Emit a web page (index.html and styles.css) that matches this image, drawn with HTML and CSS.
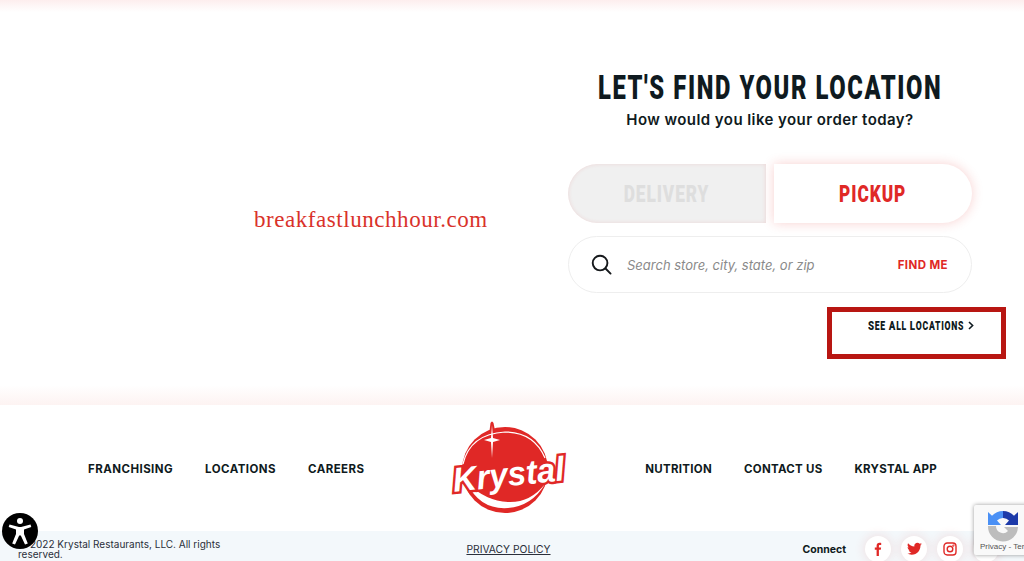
FILE: index.html
```html
<!DOCTYPE html>
<html lang="en">
  <head>
    <meta charset="UTF-8" />
    <meta name="viewport" content="width=device-width, initial-scale=1.0" />
    <title>Krystal Locations</title>
    <link rel="stylesheet" href="styles.css">
  </head>
  <body>
    <main class="finder">
      <div class="watermark">breakfastlunchhour.com</div>
      <div class="finder-col">
        <h1><span class="narrow">LET'S FIND YOUR LOCATION</span></h1>
        <p class="subtitle">How would you like your order today?</p>
        <div class="toggle">
          <div class="toggle-btn delivery"><span class="narrow">DELIVERY</span></div>
          <div class="toggle-btn pickup"><span class="narrow">PICKUP</span></div>
        </div>
        <div class="search">
          <svg class="search-icon" width="21" height="21" viewBox="0 0 22 22" fill="none" stroke="#16191c" stroke-width="2">
            <circle cx="9.5" cy="9.5" r="7.7" />
            <path d="M15.2 15.2 L20.5 20.5" stroke-linecap="round" />
          </svg>
          <span class="search-text">Search store, city, state, or zip</span>
          <span class="find-me">FIND ME</span>
        </div>
        <a class="all-locations">
          <span class="all-text"><span class="cap">S</span>EE <span class="cap">A</span>LL <span class="cap">L</span>OCATIONS</span>
          <svg width="6" height="9" viewBox="0 0 6 9" fill="none" stroke="#0f1a20" stroke-width="1.6"><path d="M1 1 L4.6 4.5 L1 8" /></svg>
        </a>
      </div>
    </main>

    <footer>
      <div class="footer-nav">
        <nav class="nav-group">
          <a>FRANCHISING</a>
          <a>LOCATIONS</a>
          <a>CAREERS</a>
        </nav>
        <svg class="logo" width="118" height="96" viewBox="0 0 118 96">
          <path d="M39.5 11 L40.5 3 Q42 0 43.5 3 L44.5 8 L46 12 Z" fill="#e02826" />
          <circle cx="55" cy="50" r="43" fill="#e02826" />
          <path d="M13 44 Q20 14 55 12 Q84 12 95 38" fill="none" stroke="#fff" stroke-width="1.2" />
          <path d="M17 63 Q30 90 58 88 Q82 86 95 64 Q80 83 58 82 Q36 81 17 63 Z" fill="#fff" />
          <path d="M42 5 L43 18 L50 20 L43 22 L42 38 L41 22 L34 20 L41 18 Z" fill="#fff" />
          <text class="logo-text" x="2" y="66" textLength="112" lengthAdjust="spacingAndGlyphs" transform="rotate(-6 59 50)">Krystal</text>
        </svg>
        <nav class="nav-group nav-right">
          <a>NUTRITION</a>
          <a>CONTACT US</a>
          <a>KRYSTAL APP</a>
        </nav>
      </div>
      <div class="footer-bottom">
        <p class="copyright">© 2022 Krystal Restaurants, LLC. All rights reserved.</p>
        <a class="privacy">PRIVACY POLICY</a>
        <div class="connect">
          <span class="connect-label">Connect</span>
          <span class="social">
            <svg width="14" height="14" viewBox="0 0 14 14" fill="#e02826"><path d="M5.6 14V7.8H3.8V5.4h1.8V3.9C5.6 1.9 6.7.8 8.5.8c.8 0 1.4.1 1.7.1v2.1H9c-.9 0-1.1.5-1.1 1.1v1.3h2.2l-.3 2.4H7.9V14z" /></svg>
          </span>
          <span class="social">
            <svg width="15" height="14" viewBox="0 0 24 20" fill="#e02826"><path d="M24 2.4c-.9.4-1.8.7-2.8.8 1-.6 1.8-1.6 2.2-2.7-1 .6-2 1-3.1 1.2C19.3.7 18 0 16.6 0c-2.7 0-4.9 2.2-4.9 4.9 0 .4 0 .8.1 1.1C7.7 5.8 4.1 3.9 1.7.9c-.4.7-.7 1.6-.7 2.5 0 1.7.9 3.2 2.2 4.1-.8 0-1.6-.2-2.2-.6v.1c0 2.4 1.7 4.4 3.9 4.8-.4.1-.8.2-1.3.2-.3 0-.6 0-.9-.1.6 2 2.4 3.4 4.6 3.4-1.7 1.3-3.8 2.1-6.1 2.1-.4 0-.8 0-1.2-.1C2.2 18.3 4.8 19 7.5 19c9.1 0 14-7.5 14-14v-.6c1-.7 1.8-1.6 2.5-2z" /></svg>
          </span>
          <span class="social">
            <svg width="14" height="14" viewBox="0 0 14 14" fill="none" stroke="#e02826" stroke-width="1.4"><rect x="1" y="1" width="12" height="12" rx="3.2" /><circle cx="7" cy="7" r="2.8" /><circle cx="10.4" cy="3.6" r=".4" /></svg>
          </span>
          <span class="social"></span>
        </div>
      </div>
    </footer>

    <div class="a11y">
      <svg width="26" height="28" viewBox="0 0 26 28" fill="#fff">
        <circle cx="13" cy="4" r="3" />
        <path d="M2.5 7.6 L12 10 H14 L23.5 7.6 L24.3 10 L17 12.6 V17 L20.8 26.5 L18 27.5 L13.8 18.5 H12.2 L8 27.5 L5.2 26.5 L9 17 V12.6 L1.7 10 Z" />
      </svg>
    </div>

    <div class="recaptcha">
      <svg width="32" height="32" viewBox="0 0 32 32">
        <path d="M16 1 A15 15 0 0 0 5 5.8 L1 2 V15 H14 L10 10.5 A8 8 0 0 1 16 8 Z" fill="#4a90f5" />
        <path d="M16 1 A15 15 0 0 1 27 5.8 L31 2 V15 H18 L22 10.5 A8 8 0 0 0 16 8 Z" fill="#1c3aa9" />
        <path d="M1 16 H9 A7 7 0 0 0 21 21 L17 17 H31 A15 15 0 0 1 1 16 Z" fill="#bdbdbd" />
      </svg>
      <span class="recaptcha-text">Privacy - Terms</span>
    </div>
  </body>
</html>
```

FILE: styles.css
```css
body {
  margin: 0;
  height: 561px;
  overflow: hidden;
  font-family: Inter, "Open Sans", sans-serif;
  color: #0f1a20;
  background: #fff;
  position: relative;
}

/* no condensed face is installed, so heavy Roboto gets squeezed */
.narrow {
  display: inline-block;
  font-family: Roboto, sans-serif;
  font-weight: 900;
  white-space: nowrap;
  transform: scaleX(0.72);
}

.finder {
  height: 405px;
  box-sizing: border-box;
  padding: 70px 52px 0 0;
  display: flex;
  justify-content: flex-end;
  background: linear-gradient(#fdeeee 0, #fff 12px, #fff 385px, #fdf3f2 405px);
  position: relative;
}

.watermark {
  position: absolute;
  left: 254px;
  top: 207px;
  font-family: "Liberation Serif", serif;
  font-size: 23px;
  letter-spacing: 0.55px;
  color: #d9322a;
}

.finder-col {
  width: 404px;
  display: flex;
  flex-direction: column;
}

h1 {
  margin: 0;
  display: flex;
  justify-content: center;
  font-size: 33px;
  line-height: 36px;
  letter-spacing: 2.2px;
}

.subtitle {
  margin: 3px 0 0;
  font-size: 15px;
  line-height: 21px;
  font-weight: 600;
  text-align: center;
  letter-spacing: 0.43px;
}

.toggle {
  margin-top: 34px;
  display: flex;
  justify-content: space-between;
}

.toggle-btn {
  width: 198px;
  height: 59px;
  display: flex;
  align-items: center;
  justify-content: center;
  font-size: 24px;
  letter-spacing: 1.3px;
}

.delivery {
  background: #f0f0f0;
  color: #dedede;
  border-radius: 30px 0 0 30px;
  box-shadow: inset 0 0 4px rgba(224, 40, 38, 0.12);
}

.pickup {
  background: #fff;
  color: #e02826;
  border-radius: 0 30px 30px 0;
  box-shadow: 0 0 12px rgba(224, 40, 38, 0.22);
}

.search {
  margin-top: 13px;
  height: 57px;
  box-sizing: border-box;
  border: 1.5px solid #eeeeee;
  border-radius: 29px;
  padding: 0 23px 0 22px;
  display: flex;
  align-items: center;
  background: #fff;
}

.search-icon {
  flex: none;
}

.search-text {
  margin-left: 15px;
  flex: 1;
  font-size: 13px;
  font-style: italic;
  color: #8a8a8a;
}

.find-me {
  font-size: 11.5px;
  font-weight: 700;
  color: #e02826;
  letter-spacing: 0.4px;
}

.all-locations {
  margin: 14px -34px 0 auto;
  width: 179px;
  height: 52px;
  box-sizing: border-box;
  border: 5px solid #b81612;
  padding: 5px 0 0 36px;
  display: flex;
  align-items: flex-start;
  gap: 4px;
}

.all-text {
  display: inline-block;
  font-family: Roboto, sans-serif;
  font-size: 12px;
  line-height: 16px;
  font-weight: 900;
  letter-spacing: 1px;
  white-space: nowrap;
  width: 96px;
  transform: scaleX(0.72);
  transform-origin: left center;
}

.cap {
  font-size: 13.5px;
}

.all-locations svg {
  margin-top: 4px;
}

footer {
  height: 156px;
  display: flex;
  flex-direction: column;
  background: #fff;
}

.footer-nav {
  height: 126px;
  box-sizing: border-box;
  padding: 0 87px 0 88px;
  display: flex;
  align-items: center;
  justify-content: space-between;
}

.nav-group {
  display: flex;
  gap: 32px;
  margin-top: 2px;
  font-size: 11.5px;
  font-weight: 700;
  letter-spacing: 0.45px;
  white-space: nowrap;
}

.nav-right {
  letter-spacing: 0.28px;
}

.logo {
  flex: none;
  margin-left: 9px;
}

.logo-text {
  font-family: "Liberation Sans", sans-serif;
  font-size: 34px;
  font-style: italic;
  font-weight: 700;
  fill: #fff;
  stroke: #e02826;
  stroke-width: 5px;
  paint-order: stroke;
}

.footer-bottom {
  height: 30px;
  padding: 0 25px 0 18px;
  background: #f3f8fb;
  display: grid;
  grid-template-columns: 1fr auto 1fr;
  align-items: center;
  font-size: 10px;
}

.copyright {
  margin: 5px 0 0;
  width: 215px;
  line-height: 10px;
  color: #2a2f3a;
}

.privacy {
  text-decoration: underline;
  color: #2a2f3a;
  margin-top: 5px;
  font-size: 10.3px;
}

.connect {
  display: flex;
  align-items: center;
  justify-content: flex-end;
  gap: 10px;
  margin-top: 5px;
}

.connect-label {
  font-weight: 700;
  font-size: 10.5px;
  margin-right: 9px;
}

.social {
  width: 26px;
  height: 26px;
  border-radius: 50%;
  background: #fff;
  box-shadow: 0 0 12px rgba(224, 40, 38, 0.14);
  display: flex;
  align-items: center;
  justify-content: center;
}

.a11y {
  position: absolute;
  left: 2px;
  top: 513px;
  width: 36px;
  height: 36px;
  border-radius: 50%;
  background: #000;
  display: flex;
  align-items: center;
  justify-content: center;
}

.recaptcha {
  position: absolute;
  left: 974px;
  top: 505px;
  width: 60px;
  height: 50px;
  box-sizing: border-box;
  padding: 5px 0 0 13px;
  background: #f9f9f9;
  box-shadow: 0 0 4px rgba(0, 0, 0, 0.4);
  border-radius: 2px;
}

.recaptcha svg {
  display: block;
}

.recaptcha-text {
  position: absolute;
  left: 6px;
  top: 37px;
  font-family: "Liberation Sans", sans-serif;
  font-size: 8px;
  color: #555;
  white-space: nowrap;
}
```
